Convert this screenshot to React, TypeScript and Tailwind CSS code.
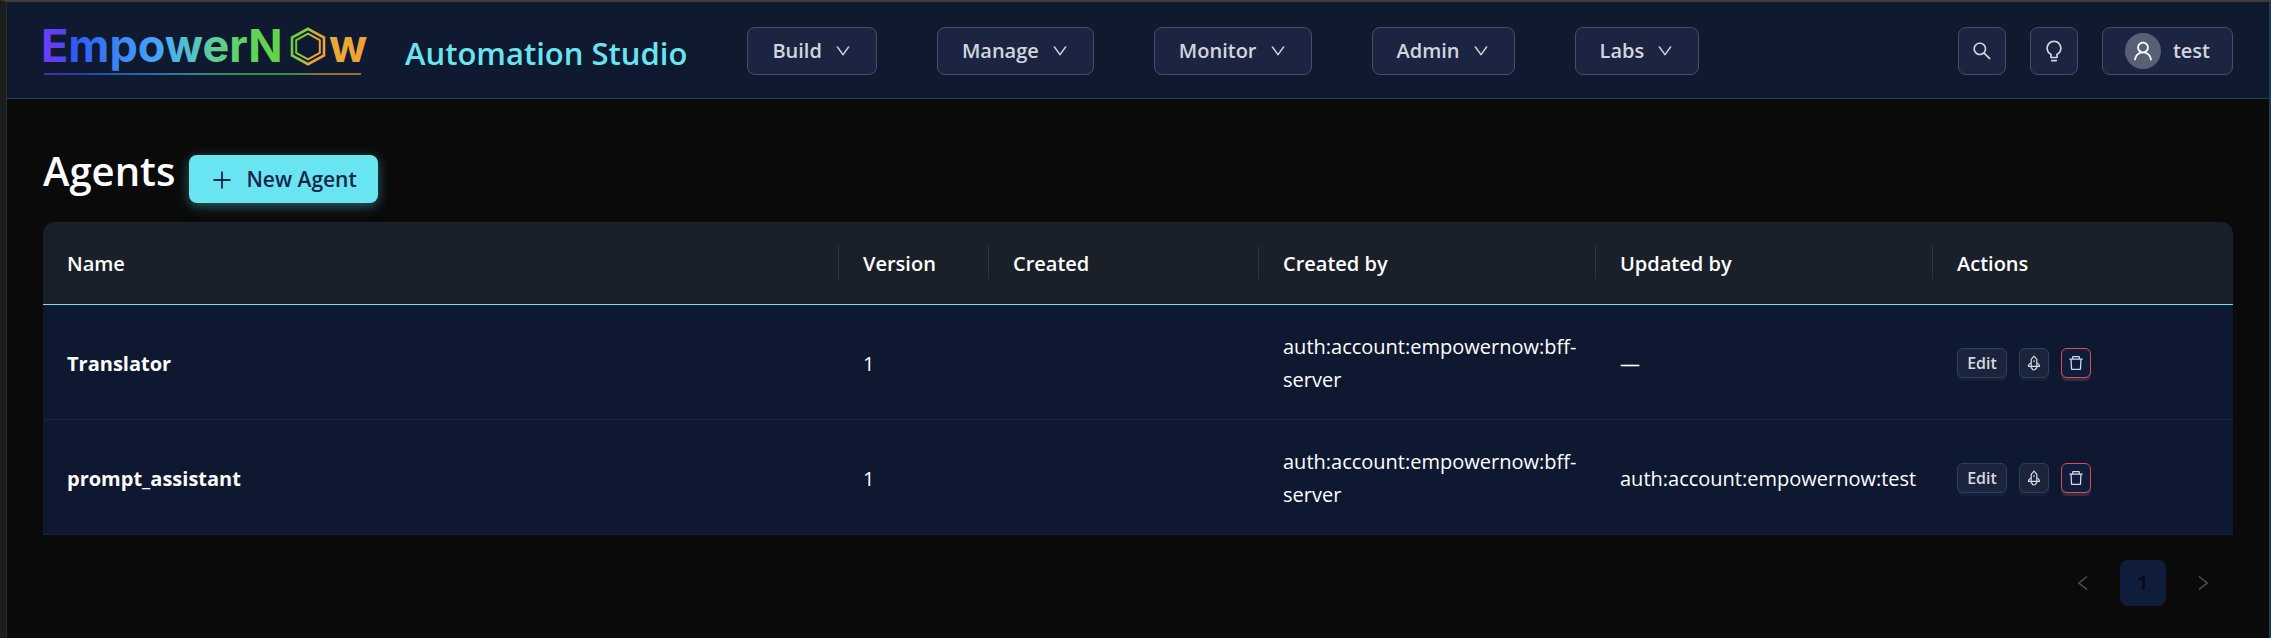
import React from "react";
import {
  AiOutlineBulb,
  AiOutlineDelete,
  AiOutlineDown,
  AiOutlineLeft,
  AiOutlinePlus,
  AiOutlineRight,
  AiOutlineRocket,
  AiOutlineSearch,
  AiOutlineUser,
} from "react-icons/ai";

type Agent = {
  name: string;
  version: number;
  created: string;
  createdBy: string;
  updatedBy: string;
};

const menus = ["Build", "Manage", "Monitor", "Admin", "Labs"];

const agents: Agent[] = [
  {
    name: "Translator",
    version: 1,
    created: "",
    createdBy: "auth:account:empowernow:bff-server",
    updatedBy: "—",
  },
  {
    name: "prompt_assistant",
    version: 1,
    created: "",
    createdBy: "auth:account:empowernow:bff-server",
    updatedBy: "auth:account:empowernow:test",
  },
];

const columns = [
  { title: "Name", width: "" },
  { title: "Version", width: "w-[150px]" },
  { title: "Created", width: "w-[270px]" },
  { title: "Created by", width: "w-[337px]" },
  { title: "Updated by", width: "w-[337px]" },
  { title: "Actions", width: "w-[300px]" },
];

function Logo() {
  return (
    <svg
      width="326"
      height="48"
      viewBox="0 0 326 48"
      className="shrink-0 overflow-visible"
      role="img"
      aria-label="EmpowerNow"
    >
      <defs>
        <linearGradient id="brand" gradientUnits="userSpaceOnUse" x1="0" y1="0" x2="326" y2="0">
          <stop offset="0" stopColor="#6d3df5" />
          <stop offset="0.05" stopColor="#5b40f6" />
          <stop offset="0.1" stopColor="#2f5cf5" />
          <stop offset="0.22" stopColor="#3b82f6" />
          <stop offset="0.36" stopColor="#4aa5f7" />
          <stop offset="0.44" stopColor="#52bfd0" />
          <stop offset="0.53" stopColor="#5ecf90" />
          <stop offset="0.62" stopColor="#60d25c" />
          <stop offset="0.76" stopColor="#62d442" />
          <stop offset="0.86" stopColor="#e8ab3c" />
          <stop offset="1" stopColor="#f3a035" />
        </linearGradient>
        <linearGradient id="hex" x1="0" y1="0" x2="1" y2="0.3">
          <stop offset="0" stopColor="#62cf42" />
          <stop offset="0.45" stopColor="#8fc840" />
          <stop offset="0.75" stopColor="#d9a93b" />
          <stop offset="1" stopColor="#f3a035" />
        </linearGradient>
      </defs>
      <g fill="url(#brand)" fontFamily="Inter, sans-serif" fontWeight="700" fontSize="45">
        <text x="-2" y="35">EmpowerN</text>
        <text x="286" y="35">w</text>
      </g>
      <g fill="none" stroke="url(#hex)" strokeLinejoin="miter">
        <path d="M265 1.8 L281 10.6 V28.4 L265 37.2 L249 28.4 V10.6 Z" strokeWidth="2.6" />
        <path d="M265 6.6 L276.8 13 V26 L265 32.4 L253.2 26 V13 Z" strokeWidth="2" />
      </g>
      <rect x="1" y="46" width="317" height="2" fill="url(#brand)" opacity="0.6" />
    </svg>
  );
}

const headerButton =
  "flex h-12 items-center justify-center rounded-lg border border-[#454e66] bg-[#1b2541] text-[#d2d5de]";

function Header() {
  return (
    <header className="flex items-center border-b border-[#1f4257] bg-[#0f1930] px-9 pt-6 pb-[23px]">
      <Logo />
      <span className="ml-9 pt-1 text-[31px] leading-[42px] font-semibold whitespace-nowrap text-[#69e5f2]">
        Automation Studio
      </span>
      <nav className="ml-[60px] flex gap-[60px]" aria-label="Main">
        {menus.map((menu) => (
          <button key={menu} type="button" className={`${headerButton} px-6 text-xl font-semibold`}>
            {menu}
            <AiOutlineDown className="ml-3 size-[18px]" />
          </button>
        ))}
      </nav>
      <div className="ml-auto flex gap-6">
        <button type="button" aria-label="Search" className={`${headerButton} w-12`}>
          <AiOutlineSearch className="size-[22px]" />
        </button>
        <button type="button" aria-label="Toggle theme" className={`${headerButton} w-12`}>
          <AiOutlineBulb className="size-6" />
        </button>
        <button type="button" className={`${headerButton} gap-3 px-[22px] text-xl font-semibold`}>
          <span className="flex size-9 items-center justify-center rounded-full bg-[#576074] text-white">
            <AiOutlineUser className="size-6" />
          </span>
          test
        </button>
      </div>
    </header>
  );
}

const smallButton =
  "flex h-[30px] items-center justify-center rounded-md border text-[#d5d8df]";
const plainButton = "border-[#27445b] bg-[#1b243c] shadow-[0_3px_0_#16203a]";

function AgentRow({ agent }: { agent: Agent }) {
  return (
    <tr className="h-[115px] border-b border-[#1a233c] bg-[#0e1831]">
      <td className="px-6 pt-[3px] font-bold">{agent.name}</td>
      <td className="px-6 pt-[3px]">{agent.version}</td>
      <td className="px-6 pt-[3px]">{agent.created}</td>
      <td className="px-6 pt-[3px]">{agent.createdBy}</td>
      <td className="px-6 pt-[3px]">{agent.updatedBy}</td>
      <td className="px-6 pt-[3px]">
        <div className="flex gap-3">
          <button type="button" className={`${smallButton} ${plainButton} w-[50px] text-base font-semibold`}>
            Edit
          </button>
          <button
            type="button"
            aria-label={`Deploy ${agent.name}`}
            className={`${smallButton} ${plainButton} w-[30px]`}
          >
            <AiOutlineRocket className="size-[18px]" />
          </button>
          <button
            type="button"
            aria-label={`Delete ${agent.name}`}
            className={`${smallButton} w-[30px] border-[#d7504c] bg-[#0f1c3b] shadow-[0_3px_0_#382b45]`}
          >
            <AiOutlineDelete className="size-[18px]" />
          </button>
        </div>
      </td>
    </tr>
  );
}

export default function App() {
  return (
    <div className="flex min-h-screen flex-col border-t-2 border-l-[6px] border-t-[#3c3c3c] border-l-[#1c1e1c] bg-[#0a0a0a] font-['Open_Sans','Noto_Sans',sans-serif] text-white">
      <div className="flex grow flex-col border-t border-r-2 border-l border-t-[#1c1e1c] border-r-[#1e3a57] border-l-[#2d2e2d]">
        <Header />
        <main className="px-9 pt-10">
          <div className="flex items-end gap-[14px]">
            <h1 className="text-[40px] leading-[64px] font-semibold">Agents</h1>
            <button
              type="button"
              className="flex h-12 items-center rounded-lg bg-[#69e5f2] px-[21px] pt-0.5 text-[21px] font-semibold text-[#14274a] shadow-[0_3px_12px_#2a6068]"
            >
              <AiOutlinePlus className="mr-3 size-6" />
              New Agent
            </button>
          </div>
          <div className="mt-[19px] overflow-hidden rounded-t-xl">
            <table className="w-full table-fixed border-collapse text-left text-xl leading-[33px]">
              <thead>
                <tr className="h-[82px] border-b border-[#69e5f2] bg-[#1a2029]">
                  {columns.map((column, index) => (
                    <th key={column.title} scope="col" className={`${column.width} p-0 font-semibold`}>
                      <div
                        className={`px-6 pt-0.5 leading-[31px] ${index < columns.length - 1 ? "border-r border-[#35332f]" : ""}`}
                      >
                        {column.title}
                      </div>
                    </th>
                  ))}
                </tr>
              </thead>
              <tbody>
                {agents.map((agent) => (
                  <AgentRow key={agent.name} agent={agent} />
                ))}
              </tbody>
            </table>
          </div>
          <nav className="mt-[25px] mr-[7px] flex justify-end gap-[14px] text-xl" aria-label="Pagination">
            <button
              type="button"
              disabled
              aria-label="Previous page"
              className="flex size-[46px] items-center justify-center text-[#4b4b4b]"
            >
              <AiOutlineLeft className="size-5" />
            </button>
            <button
              type="button"
              aria-current="page"
              className="flex size-[46px] items-center justify-center rounded-lg bg-[#0f1c3b] font-semibold text-[#070a10]"
            >
              1
            </button>
            <button
              type="button"
              disabled
              aria-label="Next page"
              className="flex size-[46px] items-center justify-center text-[#4b4b4b]"
            >
              <AiOutlineRight className="size-5" />
            </button>
          </nav>
        </main>
      </div>
    </div>
  );
}
